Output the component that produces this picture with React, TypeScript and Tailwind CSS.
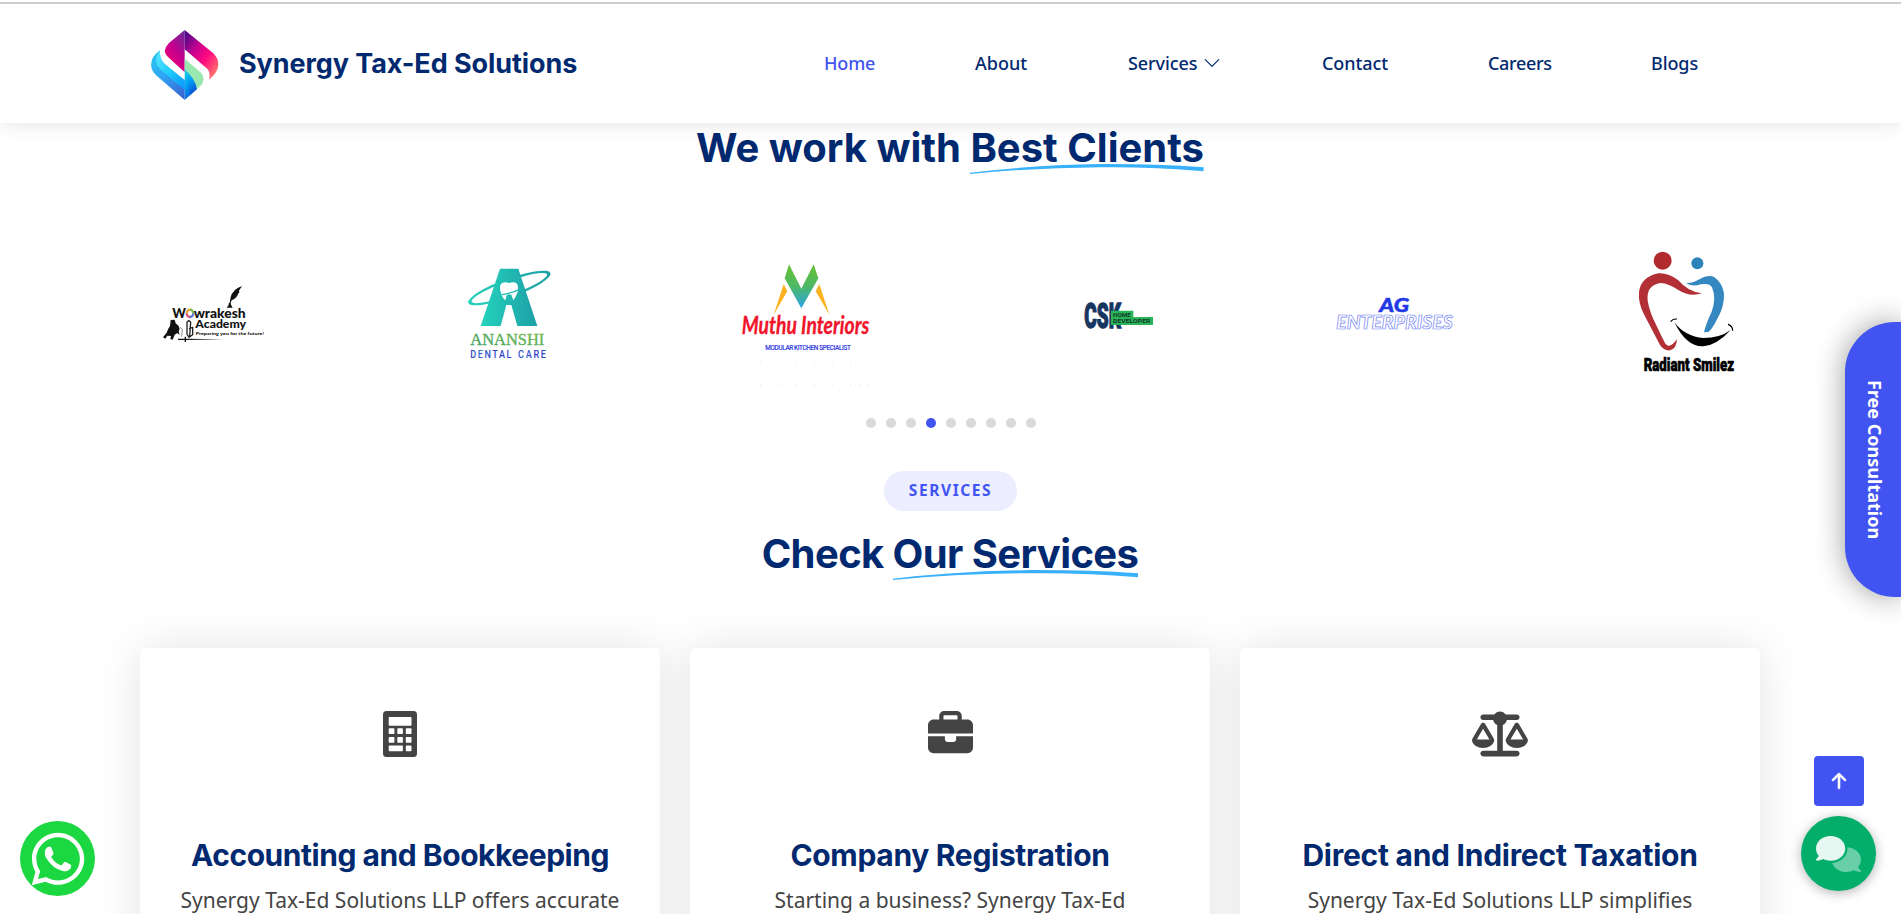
import type { ReactNode } from "react";
import { FaBriefcase, FaScaleBalanced, FaWhatsapp } from "react-icons/fa6";
import { BsArrowUpShort, BsChevronDown } from "react-icons/bs";

const navItems = [
  { label: "Home", cls: "w-[51px] tracking-[-0.15px] text-[#4154f1]" },
  { label: "About", cls: "w-[53px] text-[#012970]" },
  { label: "Services", cls: "w-[94px] tracking-[-0.1px] text-[#012970]", menu: true },
  { label: "Contact", cls: "w-[66px] tracking-[-0.1px] text-[#012970]" },
  { label: "Careers", cls: "w-[63px] tracking-[-0.35px] text-[#012970]" },
  { label: "Blogs", cls: "w-[47px] tracking-[-0.1px] text-[#012970]" },
];

function CalculatorIcon() {
  return (
    <svg viewBox="0 0 34 46" className="h-[46px] w-[34px]">
      <path
        fill="currentColor"
        fillRule="evenodd"
        d="M3.5 0 H30.5 Q34 0 34 3.5 V42.5 Q34 46 30.5 46 H3.5 Q0 46 0 42.5 V3.5 Q0 0 3.5 0 Z M6.5 6 Q5.7 6 5.7 6.8 V14 Q5.7 14.8 6.5 14.8 H27.7 Q28.5 14.8 28.5 14 V6.8 Q28.5 6 27.7 6 Z M5.7 18 Q5.7 17.2 6.5 17.2 H10.6 Q11.4 17.2 11.4 18 V22.2 Q11.4 23 10.6 23 H6.5 Q5.7 23 5.7 22.2 Z M14.3 18 Q14.3 17.2 15.1 17.2 H19.1 Q19.9 17.2 19.9 18 V22.2 Q19.9 23 19.1 23 H15.1 Q14.3 23 14.3 22.2 Z M22.8 18 Q22.8 17.2 23.6 17.2 H27.7 Q28.5 17.2 28.5 18 V22.2 Q28.5 23 27.7 23 H23.6 Q22.8 23 22.8 22.2 Z M5.7 26.8 Q5.7 26 6.5 26 H10.6 Q11.4 26 11.4 26.8 V31 Q11.4 31.8 10.6 31.8 H6.5 Q5.7 31.8 5.7 31 Z M14.3 26.8 Q14.3 26 15.1 26 H19.1 Q19.9 26 19.9 26.8 V31 Q19.9 31.8 19.1 31.8 H15.1 Q14.3 31.8 14.3 31 Z M22.8 26.8 Q22.8 26 23.6 26 H27.7 Q28.5 26 28.5 26.8 V31 Q28.5 31.8 27.7 31.8 H23.6 Q22.8 31.8 22.8 31 Z M5.7 35.4 Q5.7 34.6 6.5 34.6 H19.1 Q19.9 34.6 19.9 35.4 V39.4 Q19.9 40.2 19.1 40.2 H6.5 Q5.7 40.2 5.7 39.4 Z M22.8 35.4 Q22.8 34.6 23.6 34.6 H27.7 Q28.5 34.6 28.5 35.4 V39.4 Q28.5 40.2 27.7 40.2 H23.6 Q22.8 40.2 22.8 39.4 Z"
      />
    </svg>
  );
}

const services = [
  {
    icon: <CalculatorIcon />,
    title: "Accounting and Bookkeeping",
    cls: "tracking-[-0.46px]",
    text: "Synergy Tax-Ed Solutions LLP offers accurate",
  },
  {
    icon: <FaBriefcase />,
    title: "Company Registration",
    cls: "tracking-[-0.31px]",
    text: "Starting a business? Synergy Tax-Ed",
  },
  {
    icon: <FaScaleBalanced className="h-[56px] w-[56px]" />,
    title: "Direct and Indirect Taxation",
    cls: "tracking-[-0.26px]",
    text: "Synergy Tax-Ed Solutions LLP simplifies",
  },
];

function BrandMark() {
  return (
    <svg viewBox="60 87 207 216" className="h-[72px] w-[69px] shrink-0">
      <defs>
        <linearGradient id="bm1" x1="0.9" y1="0" x2="0.3" y2="1">
          <stop offset="0" stopColor="#6d2a9a" />
          <stop offset="0.5" stopColor="#c4008f" />
          <stop offset="1" stopColor="#f5006e" />
        </linearGradient>
        <linearGradient id="bm2" x1="0" y1="0" x2="1" y2="1">
          <stop offset="0.05" stopColor="#4b0a8a" />
          <stop offset="0.35" stopColor="#c4008f" />
          <stop offset="0.6" stopColor="#ff0a80" />
          <stop offset="1" stopColor="#ff9a66" />
        </linearGradient>
        <linearGradient id="bm3" x1="0.1" y1="0" x2="0.9" y2="1">
          <stop offset="0" stopColor="#29c5f0" />
          <stop offset="0.45" stopColor="#2fa4f5" />
          <stop offset="1" stopColor="#3b63cf" />
        </linearGradient>
        <linearGradient id="bm4" x1="0" y1="0" x2="1" y2="1">
          <stop offset="0" stopColor="#5fe6ff" />
          <stop offset="0.5" stopColor="#1fcdfc" />
          <stop offset="1" stopColor="#0b95fb" />
        </linearGradient>
        <linearGradient id="bm5" x1="0" y1="0" x2="0.4" y2="1">
          <stop offset="0" stopColor="#22d6dc" />
          <stop offset="0.5" stopColor="#00a5f5" />
          <stop offset="1" stopColor="#0b57d8" />
        </linearGradient>
      </defs>
      <path d="M164 90 L117 129 Q94 153 114 171 L164 217 Z" fill="url(#bm1)" />
      <path d="M164 90 L250 160 Q277 188 256 220 Q248 230 237 239 Q243 214 229 204 L164 148 Z" fill="url(#bm2)" />
      <path d="M90 151 Q52 178 68 213 Q72 220 80 227 L164 300 L164 241 L104 192 Q87 176 90 151 Z" fill="url(#bm3)" />
      <path d="M90 151 Q76 166 79 190 Q81 200 92 209 L164 270 L164 241 L104 192 Q87 176 90 151 Z" fill="url(#bm4)" />
      <path d="M164 207 L200 268 L164 300 Z" fill="url(#bm5)" />
      <path d="M164 176 L214 219 Q229 239 212 257 L201 267 Q197 240 164 207 Z" fill="#98e8b0" />
      <path d="M164 207 Q197 238 201 267 L180 286 Z" fill="url(#bm5)" />
    </svg>
  );
}

function Swoosh() {
  return (
    <svg viewBox="0 0 243 12" preserveAspectRatio="none" className="absolute -bottom-[1px] left-0 h-[11px] w-full">
      <path d="M0 9.6 Q62 1.4 136 0.1 Q192 -0.2 243 3.6 L243 8 Q190 2.9 136 3.5 Q66 4 0 10.8 Z" fill="#38b0fc" />
    </svg>
  );
}

function Slide({ box, children }: { box: string; children: ReactNode }) {
  return (
    <svg viewBox={box} className="h-[160px] w-[145px] shrink-0">
      {children}
    </svg>
  );
}

function Wowrakesh() {
  return (
    <Slide box="0 0 435 480">
      <g fontFamily="Lato, sans-serif" fontWeight="900" fill="#111">
        <text x="97" y="233" fontSize="40" textLength="41" lengthAdjust="spacingAndGlyphs">W</text>
        <text x="161" y="233" fontSize="37" textLength="156" lengthAdjust="spacingAndGlyphs">wrakesh</text>
        <text x="166" y="264" fontSize="36" textLength="152" lengthAdjust="spacingAndGlyphs">Academy</text>
        <text x="167" y="285" fontSize="13" textLength="205" lengthAdjust="spacingAndGlyphs">Preparing you for the future!</text>
      </g>
      <g fill="none" strokeWidth="7">
        <path d="M140 220 A10 11 0 0 1 150 209" stroke="#e8a33c" />
        <path d="M150 209 A10 11 0 0 1 160 220" stroke="#7cb84f" />
        <path d="M160 220 A10 11 0 0 1 150 231" stroke="#5b7fd0" />
        <path d="M150 231 A10 11 0 0 1 140 220" stroke="#d85a7a" />
      </g>
      <path d="M306 138 Q277 148 272 172 L269 188 L266 190 L266 195 L260 203 L278 203 L273 194 L272 188 L275 181 Q292 174 295 160 L298 158 L297 152 Z" fill="#111" />
      <path d="M92 240 L104 239 L107 250 L116 258 L119 268 L116 273 L119 285 L112 279 L104 284 L98 299 L91 297 L93 288 L82 287 L76 296 L69 292 L80 278 L84 268 L90 258 Z" fill="#111" />
      <path d="M120 262 L127 268 L125 290" fill="none" stroke="#555" strokeWidth="2" />
      <path d="M147 241 L141 247 L141 282 L147 292 L158 284 L158 262 L147 266 M147 241 L152 247 L149 290" fill="none" stroke="#222" strokeWidth="4" />
      <path d="M114 296 L134 296 L134 290 L138 290 L138 296 L250 298 L138 300 L138 306 L134 306 L134 300 L114 300 Z" fill="#111" />
    </Slide>
  );
}

function Ananshi() {
  return (
    <Slide box="885 0 435 480">
      <defs>
        <linearGradient id="an1" x1="0" y1="0" x2="1" y2="0">
          <stop offset="0" stopColor="#25d3bd" />
          <stop offset="1" stopColor="#1d9fa6" />
        </linearGradient>
        <linearGradient id="an2" x1="0" y1="1" x2="1" y2="0">
          <stop offset="0" stopColor="#3d9e6e" />
          <stop offset="1" stopColor="#7cc043" />
        </linearGradient>
        <linearGradient id="an3" x1="0" y1="0" x2="1" y2="0">
          <stop offset="0" stopColor="#2a3fc8" />
          <stop offset="0.25" stopColor="#3a70d8" />
          <stop offset="0.5" stopColor="#2a3fc8" />
          <stop offset="1" stopColor="#3048d0" />
        </linearGradient>
      </defs>
      <g transform="rotate(-20 1108 144)">
        <path
          fillRule="evenodd"
          fill="url(#an1)"
          d="M977 144 A131 28 0 0 1 1239 144 A131 28 0 0 1 977 144 Z M988 145 A116 20 0 0 0 1228 143 A118 20 0 0 0 988 145 Z"
        />
      </g>
      <path d="M1080 86 L1135 86 L1192 258 L1132 258 L1114 195 L1099 195 L1082 258 L1022 258 Z" fill="url(#an1)" />
      <path d="M1083 132 Q1090 123 1107 129 Q1126 123 1132 133 Q1138 150 1128 168 L1120 181 L1114 164 Q1106 160 1100 166 L1096 181 Q1086 172 1081 152 Q1078 140 1083 132 Z" fill="#fff" />
      <path d="M1086 164 Q1116 159 1146 145" fill="none" stroke="#22b8b2" strokeWidth="4" />
      <text x="991" y="314" fontFamily="Liberation Serif, serif" fontSize="50" fill="url(#an2)" stroke="url(#an2)" strokeWidth="1" textLength="222" lengthAdjust="spacingAndGlyphs">ANANSHI</text>
      <g fontFamily="Roboto, sans-serif" fontSize="34" fontWeight="500" fill="url(#an3)">
        <text x="0" y="353" textLength="154" lengthAdjust="spacing" transform="translate(991 0) scale(0.8 1)">DENTAL</text>
        <text x="0" y="353" textLength="105" lengthAdjust="spacing" transform="translate(1134 0) scale(0.8 1)">CARE</text>
      </g>
    </Slide>
  );
}

function Muthu() {
  return (
    <Slide box="30 0 435 480">
      <defs>
        <linearGradient id="mu1" x1="0" y1="0" x2="0" y2="1">
          <stop offset="0.1" stopColor="#63bf3c" />
          <stop offset="0.5" stopColor="#4db866" />
          <stop offset="1" stopColor="#2ba3ea" />
        </linearGradient>
      </defs>
      <path d="M207 73 L244 146 L281 73 L295 115 L244 205 L194 115 Z" fill="url(#mu1)" />
      <path d="M191 132 L202 154 L161 224 Z M298 132 L287 154 L328 224 Z" fill="#fbb321" />
      <text x="65" y="283" fontFamily="Lato, sans-serif" fontStyle="italic" fontWeight="700" fontSize="72" fill="#f0142a" stroke="#f0142a" strokeWidth="1" textLength="383" lengthAdjust="spacingAndGlyphs">Muthu Interiors</text>
      <text x="136" y="329" fontFamily="Roboto, sans-serif" fontSize="19" fill="#2a35e0" stroke="#2a35e0" strokeWidth="0.6" textLength="256" lengthAdjust="spacing">MODULAR KITCHEN SPECIALIST</text>
      <g fill="#e3e3e3">
        {[121, 175, 229, 281, 335, 390].map((x) => (
          <g key={x}>
            <rect x={x} y="364" width="3" height="4" />
            <rect x={x} y="434" width="3" height="4" />
          </g>
        ))}
        <rect x="417" y="434" width="3" height="4" />
        <rect x="444" y="434" width="3" height="4" />
      </g>
    </Slide>
  );
}

function Csk() {
  return (
    <Slide box="915 0 435 480">
      <g fontFamily="Roboto, sans-serif">
        <text x="1093" y="263" fontWeight="900" fontSize="103" fill="#17365f" stroke="#17365f" strokeWidth="4" textLength="110" lengthAdjust="spacingAndGlyphs">CSK</text>
        <path d="M1173 212 H1240 V231 H1299 V255 H1173 Z" fill="#28b457" />
        <text x="1179" y="231" fontWeight="700" fontSize="17" fill="#123a2c" textLength="53" lengthAdjust="spacingAndGlyphs">HOME</text>
        <text x="1179" y="249" fontWeight="700" fontSize="17" fill="#123a2c" textLength="112" lengthAdjust="spacingAndGlyphs">DEVELOPER</text>
      </g>
    </Slide>
  );
}

function AgEnterprises() {
  return (
    <Slide box="30 30 435 480">
      <g fontFamily="Lato, sans-serif" fontStyle="italic">
        <text x="208" y="247" fontWeight="900" fontSize="57" fill="#2238e6" stroke="#2238e6" strokeWidth="1.5" textLength="89" lengthAdjust="spacingAndGlyphs">AG</text>
        <text x="79" y="297" fontWeight="900" fontSize="59" fill="#fff" stroke="#7484f5" strokeWidth="2.2" textLength="349" lengthAdjust="spacingAndGlyphs">ENTERPRISES</text>
      </g>
    </Slide>
  );
}

function RadiantSmilez() {
  return (
    <Slide box="915 30 435 480">
      <circle cx="1058" cy="92" r="27" fill="#b02a2e" />
      <circle cx="1162" cy="100" r="18" fill="#2f83bb" />
      <path d="M1175 190 Q1140 202 1105 180 Q1075 160 1052 159 Q1008 166 1013 212 Q1018 245 1040 288 Q1056 322 1066 341 Q1080 358 1101 327 Q1100 356 1080 361 Q1062 363 1050 345 L1003 255 Q984 220 987 185 Q994 140 1045 130 Q1075 128 1105 151 Q1135 186 1175 190 Z" fill="#b23035" />
      <path d="M1128 159 Q1150 160 1168 148 Q1190 134 1211 140 Q1236 156 1242 190 Q1244 230 1220 270 Q1206 298 1195 306 L1182 307 Q1188 280 1205 245 Q1220 205 1206 172 Q1198 158 1172 163 Q1148 172 1128 159 Z" fill="#3487bf" />
      <path d="M1093 277 Q1125 320 1180 324 Q1230 324 1262 300 Q1220 346 1180 349 Q1130 352 1093 277 Z" fill="#000" />
      <path d="M1082 275 Q1088 266 1101 267 M1254 283 Q1268 288 1268 302" fill="none" stroke="#000" strokeWidth="3.5" />
      <text x="1001" y="422" fontFamily="Roboto, sans-serif" fontWeight="900" fontSize="57" fill="#000" stroke="#000" strokeWidth="2" textLength="271" lengthAdjust="spacingAndGlyphs">Radiant Smilez</text>
    </Slide>
  );
}

function ChatIcon() {
  return (
    <svg viewBox="0 0 640 512" className="h-[36px] w-[45px]">
      <path fill="#e5f7f0" d="M208 352c114.9 0 208-78.8 208-176S322.9 0 208 0S0 78.8 0 176c0 38.6 14.7 74.3 39.6 103.4c-3.5 9.4-8.7 17.7-14.2 24.7c-4.8 6.2-9.7 11-13.3 14.3c-1.8 1.6-3.3 2.9-4.3 3.7c-.5 .4-.9 .7-1.1 .8l-.2 .2C1 327.2-1.4 334.4 .8 340.9S9.1 352 16 352c21.8 0 43.8-5.6 62.1-12.5c9.2-3.5 17.8-7.4 25.2-11.4C134.1 343.3 169.8 352 208 352z" />
      <path fill="#68cfa8" d="M448 176c0 112.3-99.1 196.9-216.5 207C255.8 457.4 336.4 512 432 512c38.2 0 73.9-8.7 104.7-23.9c7.5 4 16 7.9 25.2 11.4c18.3 6.9 40.3 12.5 62.1 12.5c6.9 0 13.1-4.5 15.2-11.1c2.1-6.6-.2-13.8-5.8-17.9l-.2-.2c-.2-.2-.6-.4-1.1-.8c-1-.8-2.5-2-4.3-3.7c-3.6-3.3-8.5-8.1-13.3-14.3c-5.5-7-10.7-15.4-14.2-24.7c24.9-29 39.6-64.7 39.6-103.4c0-92.8-84.9-168.9-192.6-175.5c.4 5.1 .6 10.3 .6 15.5z" />
    </svg>
  );
}

export default function App() {
  return (
    <div className="relative h-[914px] overflow-hidden bg-white font-['Noto_Sans',sans-serif] text-[#444]">
      <header className="relative z-10 h-[123px] bg-white shadow-[0_0_20px_rgba(0,0,0,0.12)]">
        <div className="h-[4px] border-b-2 border-[#cdcdcd] bg-white" />
        <div className="flex h-[119px] items-center pt-[3px] pl-[150px]">
          <BrandMark />
          <span className="ml-[20px] w-[585px] pb-[3px] font-['Inter',sans-serif] text-[27px] leading-none font-bold tracking-[-0.08px] whitespace-nowrap text-[#012970]">
            Synergy Tax-Ed Solutions
          </span>
          <nav className="flex gap-[100px] pb-[5px] text-[18px] leading-none font-medium whitespace-nowrap">
            {navItems.map((item) => (
              <a key={item.label} className={`flex h-[18px] items-center ${item.cls}`}>
                {item.label}
                {item.menu && <BsChevronDown className="mt-[1px] ml-[6px] size-[18px] shrink-0" />}
              </a>
            ))}
          </nav>
        </div>
      </header>

      <section className="flex w-[1900px] flex-col items-center">
        <h2 className="flex h-[50px] items-center font-['Inter',sans-serif] text-[40px] leading-[52px] font-bold whitespace-pre text-[#012970]">
          <span>We work with </span>
          <span className="relative">
            Best Clients
            <Swoosh />
          </span>
        </h2>
        <div className="mt-[67px] flex w-[1620px] gap-[150px]">
          <Wowrakesh />
          <Ananshi />
          <Muthu />
          <Csk />
          <AgEnterprises />
          <RadiantSmilez />
        </div>
        <div className="mt-[18px] flex gap-[10px] pl-px">
          {[0, 1, 2, 3, 4, 5, 6, 7, 8].map((i) => (
            <span key={i} className={`size-[10px] rounded-full ${i === 3 ? "bg-[#4154f1]" : "bg-[#d9d9d9]"}`} />
          ))}
        </div>
      </section>

      <section className="mt-[43px] flex w-[1900px] flex-col items-center">
        <span className="flex h-10 w-[133px] items-center justify-center rounded-full bg-[#ecedfe] pl-px text-[15.5px] leading-none font-bold tracking-[1.6px] text-[#4154f1]">
          SERVICES
        </span>
        <h2 className="mt-[18px] flex h-[50px] items-center font-['Inter',sans-serif] text-[40px] leading-[52px] font-bold tracking-[-0.6px] whitespace-pre text-[#012970]">
          <span>Check </span>
          <span className="relative">
            Our Services
            <Swoosh />
          </span>
        </h2>
        <div className="mt-[69px] grid w-[1620px] grid-cols-3 gap-[30px]">
          {services.map((s) => (
            <article key={s.title} className="flex h-[400px] flex-col items-center rounded-[5px] bg-white shadow-[0_0_45px_rgba(0,0,0,0.11)]">
              <div className="mt-[63px] flex h-[45px] items-center text-[45px] text-[#444]">{s.icon}</div>
              <h3 className={`mt-[77px] font-['Inter',sans-serif] text-[30px] leading-[44px] font-bold text-[#012970] ${s.cls}`}>{s.title}</h3>
              <p className="mt-[7px] text-center text-[21px] leading-[33px]">{s.text}</p>
            </article>
          ))}
        </div>
      </section>

      <div className="absolute top-[322px] right-0 flex h-[275px] w-[56px] items-center justify-center rounded-l-[50px] bg-[#4154f1] pl-[4px] shadow-[0_0_30px_rgba(0,0,0,0.4)]">
        <span className="text-[18px] leading-none font-bold whitespace-nowrap text-white [writing-mode:vertical-rl]">
          Free Consultation
        </span>
      </div>

      <a className="absolute top-[821px] left-[20px] flex size-[75px] items-center justify-center rounded-full bg-[#1bd741] text-white">
        <FaWhatsapp className="size-[60px]" />
      </a>
      <a className="absolute top-[756px] left-[1814px] flex size-[50px] items-center justify-center rounded-[4px] bg-[#4154f1] text-white">
        <BsArrowUpShort className="size-[32px] stroke-current [stroke-width:0.3]" />
      </a>
      <a className="absolute top-[816px] left-[1801px] flex size-[75px] items-center justify-center rounded-full bg-[#03ae6b] shadow-[0_2px_12px_rgba(0,0,0,0.3)]">
        <ChatIcon />
      </a>
    </div>
  );
}
